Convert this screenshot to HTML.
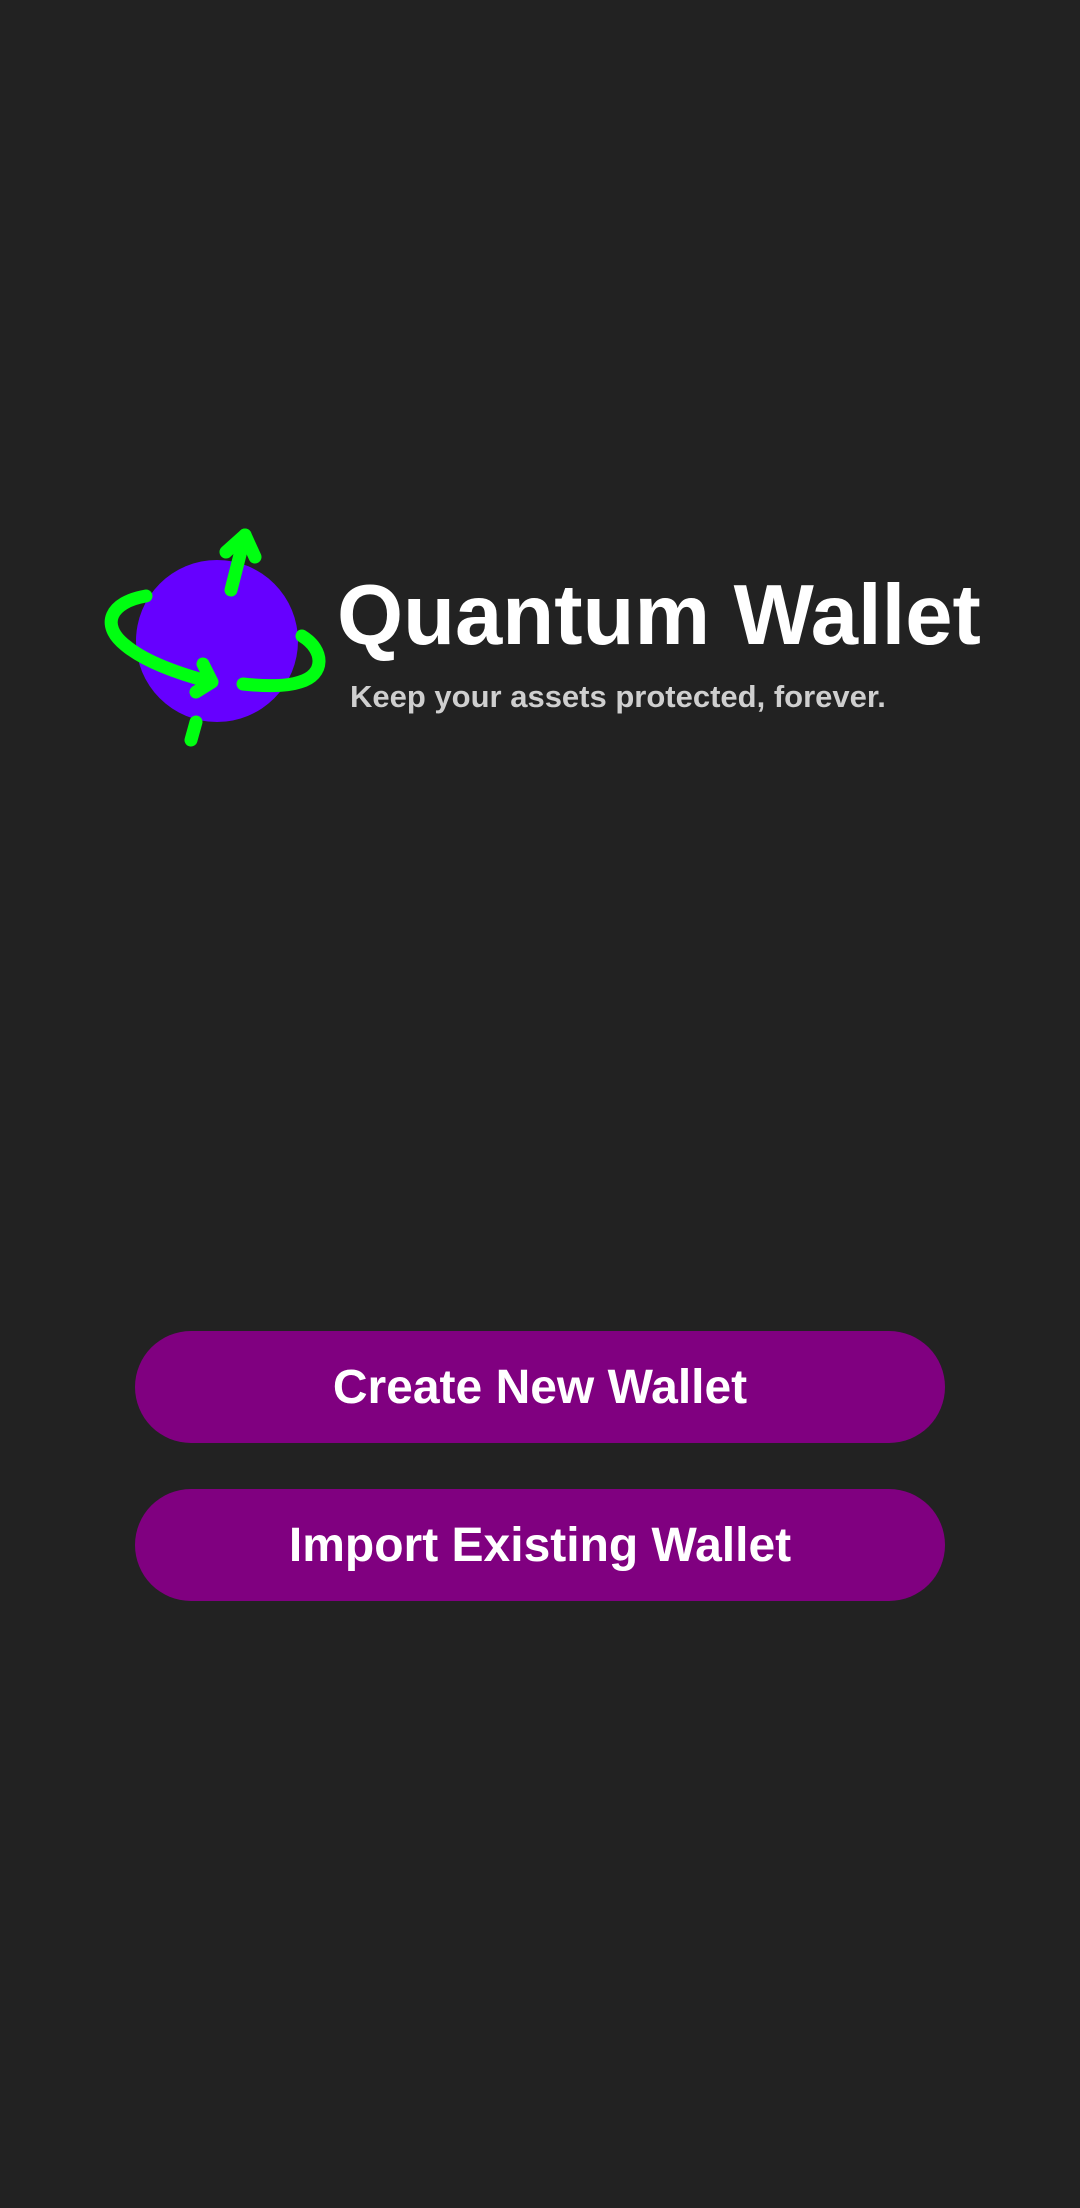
<!DOCTYPE html>
<html><head><meta charset="utf-8"><style>
html,body{margin:0;padding:0;background:#222222;}
body{width:1080px;height:2208px;position:relative;overflow:hidden;font-family:"Liberation Sans",sans-serif;}
.title{position:absolute;left:337px;top:566px;font-size:85px;font-weight:bold;color:#fff;line-height:100px;white-space:nowrap;}
.sub{position:absolute;left:350px;top:679px;font-size:31px;font-weight:bold;color:#cfcfcf;line-height:36px;white-space:nowrap;}
.btn{position:absolute;left:135px;width:810px;height:112px;border-radius:56px;background:#800080;color:#fff;font-weight:bold;font-size:48px;text-align:center;line-height:114px;}
</style></head><body>
<svg width="1080" height="900" style="position:absolute;left:0;top:0" viewBox="0 0 1080 900">
<circle cx="217" cy="641" r="81" fill="#6600ff"/>
<g fill="none" stroke="#00ff11" stroke-width="13" stroke-linecap="round" stroke-linejoin="round">
<path d="M231 590 L245 535"/>
<path d="M226 552 L245 535 L255 557"/>
<path d="M191 740 L196 722"/>
<path d="M146 596 C110 602 100 625 125 645 C145 662 180 674 210 682"/>
<path d="M203 664 L212 682 L196 692"/>
<path d="M302 636 C325 650 325 675 300 682 C285 687 262 686 243 684"/>
</g>
</svg>
<div class="title">Quantum Wallet</div>
<div class="sub">Keep your assets protected, forever.</div>
<div class="btn" style="top:1331px">Create New Wallet</div>
<div class="btn" style="top:1489px">Import Existing Wallet</div>
</body></html>
